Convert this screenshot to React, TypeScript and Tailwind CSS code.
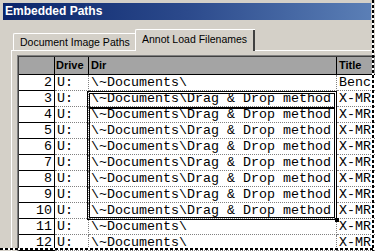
import React from 'react';

const rows = [
  { n: 2, dir: '\\~Documents\\', title: 'Benc' },
  { n: 3, dir: '\\~Documents\\Drag & Drop method', title: 'X-MR' },
  { n: 4, dir: '\\~Documents\\Drag & Drop method', title: 'X-MR' },
  { n: 5, dir: '\\~Documents\\Drag & Drop method', title: 'X-MR' },
  { n: 6, dir: '\\~Documents\\Drag & Drop method', title: 'X-MR' },
  { n: 7, dir: '\\~Documents\\Drag & Drop method', title: 'X-MR' },
  { n: 8, dir: '\\~Documents\\Drag & Drop method', title: 'X-MR' },
  { n: 9, dir: '\\~Documents\\Drag & Drop method', title: 'X-MR' },
  { n: 10, dir: '\\~Documents\\Drag & Drop method', title: 'X-MR' },
  { n: 11, dir: '\\~Documents\\', title: 'X-MR' },
  { n: 12, dir: '\\~Documents\\', title: 'X-MR' },
];

function Grid() {
  return (
    <div className="border-t border-l border-[#808080]">
      <div className="border-t border-l border-[#404040] bg-white font-['Liberation_Mono',monospace] text-[13.33px] text-black">
        {/* header */}
        <div className="flex h-[18px] bg-[#a4a4a4] border-b border-black font-['Liberation_Sans',Arial,sans-serif] text-[11px] font-bold leading-[17px]">
          <div className="w-[36px] shrink-0 border-r border-black" />
          <div className="w-[34px] shrink-0 border-r border-black pl-[1px]">Drive</div>
          <div className="w-[248px] shrink-0 border-r border-black pl-[2px]">Dir</div>
          <div className="flex-1 pl-[2px] whitespace-nowrap">Title</div>
        </div>

        {rows.map((r) => (
          <div key={r.n} className="flex h-[16px] leading-[15px] whitespace-nowrap">
            <div className="w-[36px] shrink-0 border-r border-b border-black text-right pr-[2px]">{r.n}</div>
            <div className="w-[34px] shrink-0 border-r border-b border-dotted border-[#808080] pl-[2px]">U:</div>
            <div className="w-[248px] shrink-0 border-r border-b border-dotted border-[#808080] pl-[2px] overflow-hidden">
              {r.dir}
            </div>
            <div className="flex-1 border-b border-dotted border-[#808080] pl-[2px] overflow-hidden">{r.title}</div>
          </div>
        ))}
      </div>
    </div>
  );
}

export default function App() {
  return (
    <div className="relative w-[375px] h-[251px] overflow-hidden bg-[#d4d0c8] font-['Liberation_Sans',Arial,sans-serif]">
      <div className="pt-[3px] pl-[3px] pr-[4px]">
        <div className="h-[17px] bg-gradient-to-r from-[#0a246a] via-[#2c4a8c] to-[#5b7fb6] pl-[2px] text-[12px] font-bold leading-[17px] text-white">
          Embedded Paths
        </div>
      </div>

      {/* tabs */}
      <div className="flex items-end h-[30px] pl-[13px]">
        <div className="h-[17px] w-[122px] border-t border-l border-white rounded-tl-[2px] pl-[6px] text-[10.5px] leading-[17px] text-black">
          Document Image Paths
        </div>
        <div className="relative z-10 -mb-[1px] h-[22px] w-[120px] border-t border-l border-white bg-[#d4d0c8] rounded-tl-[2px]">
          <div className="h-full border-r-2 border-[#404040] pl-[6px] text-[10.5px] leading-[19px] text-black">
            Annot Load Filenames
          </div>
        </div>
      </div>

      {/* panel */}
      <div className="ml-[11px] border-t border-l border-white pl-[5px] pt-[4px]">
        <Grid />
      </div>

      {/* selection range */}
      <div className="absolute left-[87px] top-[91px] w-[250px] h-[129px] border-[3px] border-double border-black">
        <div className="h-[15px] border-b-2 border-black" />
      </div>
      <div className="absolute left-[335px] top-[218px] w-[4px] h-[4px] bg-black" />

      {/* dashed capture edges */}
      <div className="absolute right-[1px] top-0 bottom-0 w-[2px] bg-[repeating-linear-gradient(to_bottom,#000_0_3px,#fff_3px_5px)]" />
      <div className="absolute left-0 right-[1px] bottom-[1px] h-[2px] bg-[repeating-linear-gradient(to_right,#000_0_3px,#fff_3px_5px)]" />
    </div>
  );
}
